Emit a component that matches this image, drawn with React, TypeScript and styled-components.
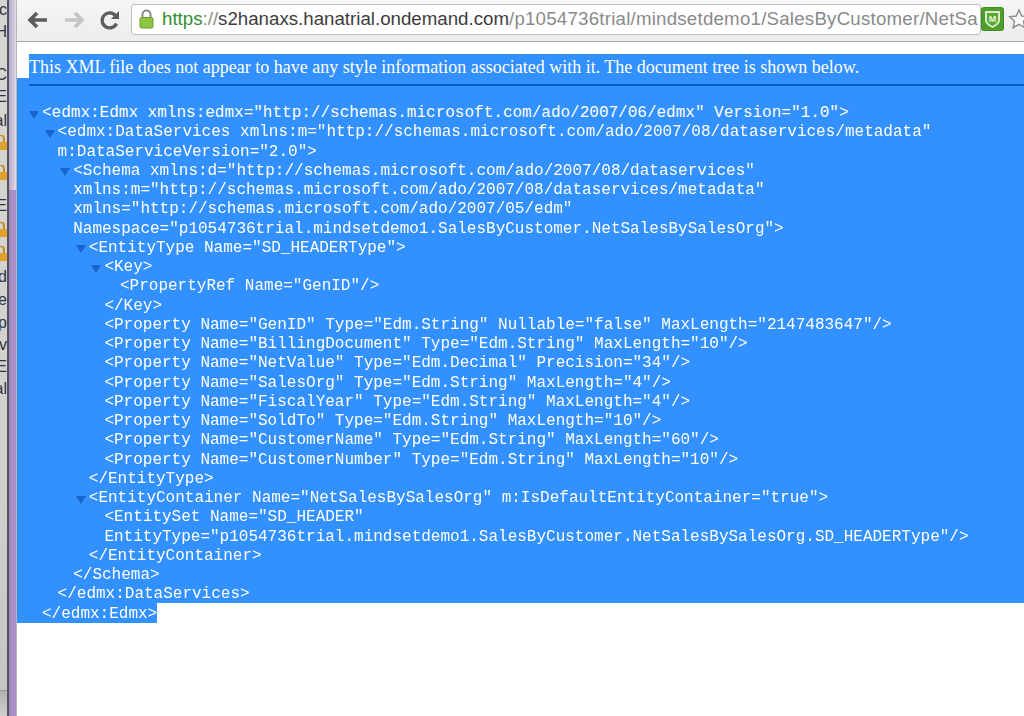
import styled, { createGlobalStyle } from "styled-components";

const GlobalStyle = createGlobalStyle`
  html, body {
    margin: 0;
    padding: 0;
    background: #ffffff;
  }
`;

const selection = "#3390ff";

type TreeLine = { level: number; text: string; open?: boolean };

const lines: TreeLine[] = [
  { level: 0, open: true, text: '<edmx:Edmx xmlns:edmx="http://schemas.microsoft.com/ado/2007/06/edmx" Version="1.0">' },
  { level: 1, open: true, text: '<edmx:DataServices xmlns:m="http://schemas.microsoft.com/ado/2007/08/dataservices/metadata"' },
  { level: 1, text: 'm:DataServiceVersion="2.0">' },
  { level: 2, open: true, text: '<Schema xmlns:d="http://schemas.microsoft.com/ado/2007/08/dataservices"' },
  { level: 2, text: 'xmlns:m="http://schemas.microsoft.com/ado/2007/08/dataservices/metadata"' },
  { level: 2, text: 'xmlns="http://schemas.microsoft.com/ado/2007/05/edm"' },
  { level: 2, text: 'Namespace="p1054736trial.mindsetdemo1.SalesByCustomer.NetSalesBySalesOrg">' },
  { level: 3, open: true, text: '<EntityType Name="SD_HEADERType">' },
  { level: 4, open: true, text: "<Key>" },
  { level: 5, text: '<PropertyRef Name="GenID"/>' },
  { level: 4, text: "</Key>" },
  { level: 4, text: '<Property Name="GenID" Type="Edm.String" Nullable="false" MaxLength="2147483647"/>' },
  { level: 4, text: '<Property Name="BillingDocument" Type="Edm.String" MaxLength="10"/>' },
  { level: 4, text: '<Property Name="NetValue" Type="Edm.Decimal" Precision="34"/>' },
  { level: 4, text: '<Property Name="SalesOrg" Type="Edm.String" MaxLength="4"/>' },
  { level: 4, text: '<Property Name="FiscalYear" Type="Edm.String" MaxLength="4"/>' },
  { level: 4, text: '<Property Name="SoldTo" Type="Edm.String" MaxLength="10"/>' },
  { level: 4, text: '<Property Name="CustomerName" Type="Edm.String" MaxLength="60"/>' },
  { level: 4, text: '<Property Name="CustomerNumber" Type="Edm.String" MaxLength="10"/>' },
  { level: 3, text: "</EntityType>" },
  { level: 3, open: true, text: '<EntityContainer Name="NetSalesBySalesOrg" m:IsDefaultEntityContainer="true">' },
  { level: 4, text: '<EntitySet Name="SD_HEADER"' },
  { level: 4, text: 'EntityType="p1054736trial.mindsetdemo1.SalesByCustomer.NetSalesBySalesOrg.SD_HEADERType"/>' },
  { level: 3, text: "</EntityContainer>" },
  { level: 2, text: "</Schema>" },
  { level: 1, text: "</edmx:DataServices>" },
];

// bits of the desktop window showing behind the browser
const behind: { text?: string; lock?: boolean; height: number }[] = [
  { text: "c", height: 20 },
  { text: "H", height: 24 },
  { height: 20 },
  { text: "C", height: 22 },
  { text: "IE", height: 22 },
  { text: "al", height: 26 },
  { lock: true, height: 18 },
  { lock: true, height: 42 },
  { text: "WE", height: 24 },
  { lock: true, height: 24 },
  { lock: true, height: 24 },
  { text: "d", height: 22 },
  { text: "ce", height: 24 },
  { text: "p", height: 22 },
  { text: "v", height: 22 },
  { text: "E", height: 22 },
  { text: "al", height: 22 },
];

const Page = styled.div`
  display: flex;
  width: 1024px;
  height: 716px;
  overflow: hidden;
  filter: blur(0.35px);
`;

const Edge = styled.div`
  display: flex;
  flex: 0 0 17px;
`;

const Desktop = styled.div`
  display: flex;
  flex-direction: column;
  width: 7px;
  overflow: hidden;
  background: linear-gradient(180deg, #d8d6d2 0, #d0cfcc 70%, #c4c4c4 100%);
`;

const DesktopBit = styled.div<{ $height: number }>`
  display: flex;
  flex: 0 0 ${(p) => p.$height}px;
  justify-content: flex-end;
  align-items: center;
  font: 16px "Liberation Sans", Arial, sans-serif;
  color: #333340;
  svg {
    flex: none;
  }
`;

const DesktopFoot = styled.div`
  margin-top: auto;
  height: 25px;
  background: linear-gradient(180deg, #b0b0b0 0, #d0d0d0 100%);
  border-top: 1px solid #999999;
`;

const DarkLine = styled.div`
  width: 2px;
  background: #55545a;
`;

const Frame = styled.div`
  display: flex;
  flex-direction: column;
  width: 7px;
  border-right: 1px solid #b9b5bf;
  box-sizing: content-box;
`;

const FrameTop = styled.div`
  flex: 0 0 190px;
  background: linear-gradient(90deg, #b9a6cf 0, #cfc4dc 60%, #e4dfe8 100%);
`;

const FrameRest = styled.div`
  flex: 1;
  background: linear-gradient(90deg, #9a80bb 0, #ab90c9 50%, #a68cc4 100%);
`;

const Main = styled.div`
  display: flex;
  flex-direction: column;
  flex: 1;
  min-width: 0;
`;

const Toolbar = styled.div`
  display: flex;
  align-items: center;
  flex: 0 0 42px;
  box-sizing: border-box;
  padding: 0 0 3px 3px;
  background: linear-gradient(180deg, #f6f6f6, #ececec);
  border-bottom: 1px solid #a9a9a9;
`;

const NavButton = styled.div`
  display: flex;
  align-items: center;
  justify-content: center;
  flex: 0 0 36px;
  height: 30px;
  padding-top: 1px;
`;

const AddressBar = styled.div`
  display: flex;
  align-items: center;
  gap: 8px;
  flex: 0 0 850px;
  height: 31px;
  margin-left: 3px;
  padding-left: 7px;
  box-sizing: border-box;
  overflow: hidden;
  background: #ffffff;
  border: 1px solid #bdbdbd;
  border-radius: 3px;
  svg {
    flex: none;
  }
`;

const Url = styled.div`
  flex: none;
  font: 18.7px "Liberation Sans", Arial, sans-serif;
  white-space: nowrap;
  color: #8a8a8a;
`;

const Scheme = styled.span`
  color: #2f8f2f;
`;

const Host = styled.span`
  color: #3c3c3c;
`;

const UrlPath = styled.span`
  letter-spacing: 0.22px;
`;

const Extensions = styled.div`
  display: flex;
  align-items: center;
  gap: 4px;
  flex: none;
`;

const Document = styled.div`
  display: flex;
  flex-direction: column;
  flex: 1;
  padding-top: 12px;
`;

const Notice = styled.div`
  display: flex;
  height: 24px;
  padding-left: 12px;
`;

const NoticeText = styled.div`
  flex: 1;
  background: ${selection};
  color: #ffffff;
  font: 18px/26px "Liberation Serif", "Times New Roman", serif;
  white-space: nowrap;
`;

const SelectedBlock = styled.div`
  background: ${selection};
  padding-top: 6px;
`;

const Rule = styled.div`
  height: 2px;
  margin: 0 0 16px 12px;
  background: #0a5cc4;
`;

const Row = styled.div<{ $level: number }>`
  display: flex;
  align-items: center;
  height: 19.25px;
  box-sizing: border-box;
  padding-top: 4px;
  padding-left: ${(p) => 25 + p.$level * 15.6}px;
  position: relative;
  color: #ffffff;
  font: 16px/19.25px "Liberation Mono", "Courier New", monospace;
  white-space: pre;
`;

const Fold = styled.svg`
  position: absolute;
  width: 10px;
  height: 8px;
  margin-left: -13px;
  margin-top: 2px;
`;

const LastRow = styled(Row)`
  width: 140px;
  height: 20px;
  padding-left: 25px;
  background: ${selection};
`;

const LockIcon = () => (
  <svg width="15" height="20" viewBox="0 0 15 20">
    <path d="M3.5 9V5.5a4 4 0 0 1 8 0V9" fill="none" stroke="#8a8a8a" strokeWidth="2" />
    <rect x="1" y="8.500" width="13" height="10.500" rx="1.500" fill="#8cc63f" stroke="#6a9a2a" />
  </svg>
);

const OrangeLock = () => (
  <svg width="14" height="16" viewBox="0 0 14 16">
    <path d="M3 7V4a4 4 0 0 1 8 0v3" fill="none" stroke="#c98a20" strokeWidth="2" />
    <rect x="0" y="7" width="14" height="8" fill="#e0a030" />
  </svg>
);

const BackIcon = () => (
  <svg width="22" height="20" viewBox="0 0 22 20">
    <path d="M10 3 3 10l7 7M3 10h17" fill="none" stroke="#5c5c5c" strokeWidth="3.600" />
  </svg>
);

const ForwardIcon = () => (
  <svg width="22" height="20" viewBox="0 0 22 20">
    <path d="M12 3l7 7-7 7M19 10H2" fill="none" stroke="#c4c4c4" strokeWidth="3.600" />
  </svg>
);

const ReloadIcon = () => (
  <svg width="22" height="22" viewBox="0 0 22 22">
    <path d="M17.500 14.500a7.500 7.500 0 1 1-.8-7.500" fill="none" stroke="#5c5c5c" strokeWidth="3.200" />
    <path d="M20 2v8h-8z" fill="#5c5c5c" />
  </svg>
);

const ShieldIcon = () => (
  <svg width="23" height="24" viewBox="0 0 23 24">
    <rect x="0.500" y="0.500" width="22" height="23" rx="2" fill="#4f9e2c" stroke="#3f8a24" />
    <path d="M4 4h15v9c0 4-4 6-7.500 8C8 19 4 17 4 13z" fill="#d8ecc8" />
    <path d="M6 6h11v7c0 3-3 4.500-5.500 6C9 17.500 6 16 6 13z" fill="#5aa838" />
    <text x="11.500" y="15" fontSize="9" fontWeight="700" textAnchor="middle" fill="#e8f4dc" fontFamily="Liberation Sans">M</text>
  </svg>
);

const StarIcon = () => (
  <svg width="22" height="22" viewBox="0 0 22 22">
    <path d="M11 2l2.800 6 6.500.8-4.800 4.400 1.300 6.500L11 16.400 5.200 19.700l1.300-6.500L1.700 8.800 8.200 8z" fill="#fafafa" stroke="#8e8e8e" strokeWidth="1.500" />
  </svg>
);

const FoldMark = () => (
  <Fold viewBox="0 0 10 8">
    <path d="M0 0h10L5 8z" fill="#1664cc" />
  </Fold>
);

export default function App() {
  return (
    <>
      <GlobalStyle />
      <Page>
        <Edge>
          <Desktop>
            {behind.map((bit, i) => (
              <DesktopBit key={i} $height={bit.height}>
                {bit.lock ? <OrangeLock /> : bit.text}
              </DesktopBit>
            ))}
            <DesktopFoot />
          </Desktop>
          <DarkLine />
          <Frame>
            <FrameTop />
            <FrameRest />
          </Frame>
        </Edge>
        <Main>
          <Toolbar>
            <NavButton>
              <BackIcon />
            </NavButton>
            <NavButton>
              <ForwardIcon />
            </NavButton>
            <NavButton>
              <ReloadIcon />
            </NavButton>
            <AddressBar>
              <LockIcon />
              <Url>
                <Scheme>https</Scheme>://<Host>s2hanaxs.hanatrial.ondemand.com</Host>
                <UrlPath>/p1054736trial/mindsetdemo1/SalesByCustomer/NetSa</UrlPath>
              </Url>
            </AddressBar>
            <Extensions>
              <ShieldIcon />
              <StarIcon />
            </Extensions>
          </Toolbar>
          <Document>
            <Notice>
              <NoticeText>This XML file does not appear to have any style information associated with it. The document tree is shown below.</NoticeText>
            </Notice>
            <SelectedBlock>
              <Rule />
              {lines.map((line, i) => (
                <Row key={i} $level={line.level}>
                  {line.open && <FoldMark />}
                  {line.text}
                </Row>
              ))}
            </SelectedBlock>
            <LastRow $level={0}>{"</edmx:Edmx>"}</LastRow>
          </Document>
        </Main>
      </Page>
    </>
  );
}
